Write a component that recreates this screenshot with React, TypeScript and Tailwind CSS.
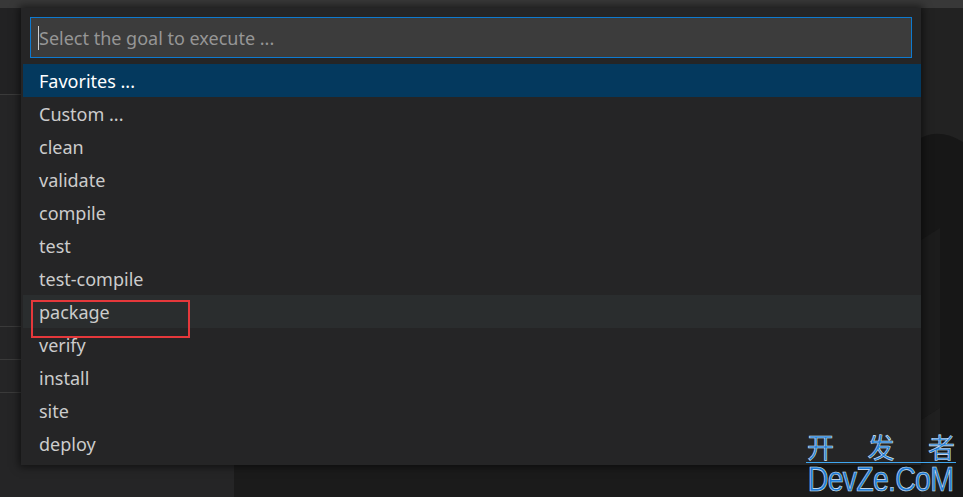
import React from 'react';

const goals = [
  'Favorites ...',
  'Custom ...',
  'clean',
  'validate',
  'compile',
  'test',
  'test-compile',
  'package',
  'verify',
  'install',
  'site',
  'deploy',
];

const font = { fontFamily: '"Noto Sans", "Open Sans", sans-serif' };

const App: React.FC = () => {
  return (
    <div className="relative w-[963px] h-[497px] overflow-hidden bg-[#1e1e1e]" style={font}>
      {/* Title strip */}
      <div className="h-2 bg-[#383838]" />

      {/* Workbench behind the picker */}
      <div className="flex h-[489px]">
        <div className="w-[234px] bg-[#252526] flex flex-col">
          <div className="h-[86px] bg-[#222223]" />
          <div className="h-px bg-[#3a3a3a]" />
          <div className="h-[231px]" />
          <div className="h-px bg-[#3a3a3a]" />
          <div className="h-[32px]" />
          <div className="h-px bg-[#3a3a3a]" />
          <div className="h-[32px]" />
          <div className="h-px bg-[#3a3a3a]" />
        </div>
        <div className="relative flex-1 bg-[#1b1b1b]">
          <svg className="absolute left-0 top-0" width="729" height="489" viewBox="234 8 729 489">
            <rect x="921" y="8" width="42" height="489" fill="#222222" />
            <path d="M921 138 Q940 128 963 142 L963 497 L940 497 L940 408 L921 420 Z" fill="#171717" />
            <path d="M921 240 L940 228 L940 408 L921 420 Z" fill="#1c1c1c" />
            <path d="M921 420 L940 408 L940 497 L921 497 Z" fill="#202020" />
          </svg>
        </div>
      </div>

      {/* Quick pick */}
      <div className="absolute left-[21px] top-2 w-[900px] bg-[#252526] shadow-[0_0_8px_2px_rgba(0,0,0,0.55)] pt-[9px] pb-[5px]">
        <div className="mx-[9px] h-[41px] border border-[#0e7ad0] bg-[#3c3c3c] flex items-center pl-[7px] pt-px">
          <div className="w-px h-[24px] bg-[#cccccc]" />
          <span className="text-[18px] text-[#969696] leading-none">Select the goal to execute ...</span>
        </div>
        <div className="mt-[6px] ml-[2px] flex flex-col">
          {goals.map((g, i) => (
            <div
              key={g}
              className={
                i === 0
                  ? 'relative h-[33px] flex items-center pl-4 pt-[2px] text-[18px] text-white bg-[#04395e]'
                  : i === 7
                  ? 'relative h-[33px] flex items-center pl-4 pt-[2px] text-[18px] text-[#cccccc] bg-[#2a2d2e]'
                  : 'relative h-[33px] flex items-center pl-4 pt-[2px] text-[18px] text-[#cccccc]'
              }
            >
              {g}
              {i === 7 && (
                <div className="absolute left-[8px] top-[5px] w-[159px] h-[38px] border-2 border-[#e5383b]" />
              )}
            </div>
          ))}
        </div>
      </div>

      {/* Watermark */}
      <div className="absolute left-[806px] top-[432px] w-[150px] flex flex-col">
        <div
          className="w-full h-[30px] flex justify-between items-center px-[1px] text-[27px] leading-[28px] text-[#1f7ad6] [-webkit-text-stroke:0.6px_#dfe8f0]"
          style={{ fontFamily: '"Noto Sans CJK SC", sans-serif' }}
        >
          <span>开</span>
          <span>发</span>
          <span>者</span>
        </div>
        <div className="w-full h-px bg-[#3fa6ef]" />
        <div className="w-full h-[32px] flex justify-center items-center">
          <span
            className="block text-[33px] leading-[32px] tracking-[-1px] scale-x-[0.87] scale-y-[1.08] whitespace-nowrap text-[#1f7ad6] [-webkit-text-stroke:0.6px_#dfe8f0]"
            style={{ fontFamily: '"Liberation Sans", sans-serif' }}
          >
            DevZe.CoM
          </span>
        </div>
      </div>
    </div>
  );
};

export default App;
